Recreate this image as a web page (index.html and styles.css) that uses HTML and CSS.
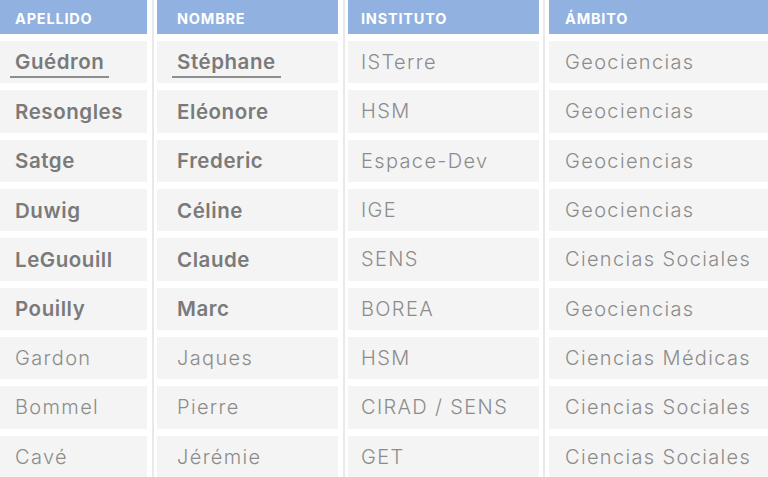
FILE: index.html
```html
<!DOCTYPE html>
<html lang="es">
<head>
<meta charset="utf-8">
<title>Investigadores</title>
<link rel="stylesheet" href="styles.css">
</head>
<body>
<div class="table">
  <div class="th c1">APELLIDO</div>
  <div class="th c2">NOMBRE</div>
  <div class="th c3">INSTITUTO</div>
  <div class="th c4">ÁMBITO</div>

  <div class="td c1 b"><span class="link">Guédron</span></div>
  <div class="td c2 b"><span class="link">Stéphane</span></div>
  <div class="td c3">ISTerre</div>
  <div class="td c4">Geociencias</div>

  <div class="td c1 b">Resongles</div>
  <div class="td c2 b">Eléonore</div>
  <div class="td c3">HSM</div>
  <div class="td c4">Geociencias</div>

  <div class="td c1 b">Satge</div>
  <div class="td c2 b">Frederic</div>
  <div class="td c3">Espace-Dev</div>
  <div class="td c4">Geociencias</div>

  <div class="td c1 b">Duwig</div>
  <div class="td c2 b">Céline</div>
  <div class="td c3">IGE</div>
  <div class="td c4">Geociencias</div>

  <div class="td c1 b">LeGuouill</div>
  <div class="td c2 b">Claude</div>
  <div class="td c3">SENS</div>
  <div class="td c4">Ciencias Sociales</div>

  <div class="td c1 b">Pouilly</div>
  <div class="td c2 b">Marc</div>
  <div class="td c3">BOREA</div>
  <div class="td c4">Geociencias</div>

  <div class="td c1">Gardon</div>
  <div class="td c2">Jaques</div>
  <div class="td c3">HSM</div>
  <div class="td c4">Ciencias Médicas</div>

  <div class="td c1">Bommel</div>
  <div class="td c2">Pierre</div>
  <div class="td c3">CIRAD / SENS</div>
  <div class="td c4">Ciencias Sociales</div>

  <div class="td c1">Cavé</div>
  <div class="td c2">Jérémie</div>
  <div class="td c3">GET</div>
  <div class="td c4">Ciencias Sociales</div>
</div>
</body>
</html>
```

FILE: styles.css
```css
html, body {
  margin: 0;
  padding: 0;
  background: #ffffff;
  overflow: hidden;
}

.table {
  display: grid;
  grid-template-columns: 147px 181px 191px 1fr;
  grid-template-rows: 34px repeat(9, 42.33px);
  column-gap: 10px;
  row-gap: 7px;
  width: 768px;
  height: 477px;
  background-image:
    linear-gradient(to right, transparent 152px, #e9e9e9 152px, #e9e9e9 154px, transparent 154px),
    linear-gradient(to right, transparent 343px, #e9e9e9 343px, #e9e9e9 345px, transparent 345px),
    linear-gradient(to right, transparent 543px, #e9e9e9 543px, #e9e9e9 545px, transparent 545px);
  font-family: Inter, "Noto Sans", sans-serif;
}

.th {
  background: #91b1e0;
  color: #ffffff;
  font-weight: 700;
  font-size: 14.5px;
  letter-spacing: 0.8px;
  display: flex;
  align-items: center;
  padding-top: 2px;
}

.td {
  background: #f4f4f4;
  color: #8c8c8c;
  font-size: 20px;
  font-weight: 300;
  letter-spacing: 1.35px;
  display: flex;
  align-items: center;
  white-space: nowrap;
}

.td.b {
  color: #7a7a7a;
  font-size: 20.5px;
  font-weight: 600;
  letter-spacing: 0.55px;
}

.c1 { padding-left: 15px; }
.c2 { padding-left: 20px; }
.c3 { padding-left: 13px; }
.c4 { padding-left: 16px; }

.link {
  display: inline-block;
  margin-left: -5px;
  margin-top: 4px;
  padding: 0 5px 2px;
  border-bottom: 2px solid #8e8e8e;
  line-height: 24px;
}
```
